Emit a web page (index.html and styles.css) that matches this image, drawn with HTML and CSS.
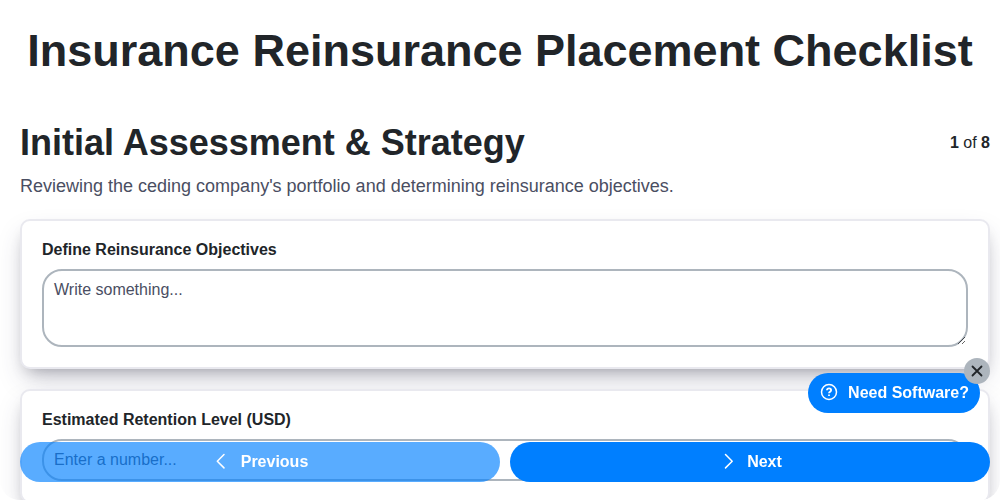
FILE: index.html
```html
<!DOCTYPE html>
<html lang="en">
<head>
<meta charset="utf-8">
<meta name="viewport" content="width=device-width, initial-scale=1">
<title>Insurance Reinsurance Placement Checklist</title>
<link rel="stylesheet" href="styles.css">
</head>
<body>
<main class="page">
  <h1 class="title">Insurance Reinsurance Placement Checklist</h1>
  <form class="step">
    <header class="step-header">
      <div class="step-heading">
        <h2 class="step-title">Initial Assessment &amp; Strategy</h2>
        <span class="step-count"><b>1</b> of <b>8</b></span>
      </div>
      <p class="step-text">Reviewing the ceding company's portfolio and determining reinsurance objectives.</p>
    </header>
    <div class="card">
      <label class="label" for="objectives">Define Reinsurance Objectives</label>
      <textarea class="field field-area" id="objectives" placeholder="Write something..."></textarea>
    </div>
    <div class="card">
      <label class="label" for="retention">Estimated Retention Level (USD)</label>
      <input class="field" id="retention" type="text" inputmode="decimal" placeholder="Enter a number...">
    </div>
  </form>
</main>
<nav class="pager">
  <button class="button" type="button" disabled>
    <svg class="icon" viewBox="0 0 20 20" aria-hidden="true"><path d="M12 2.500 5.300 9.200l6.700 6.700"/></svg>
    Previous
  </button>
  <button class="button" type="button">
    <svg class="icon" viewBox="0 0 20 20" aria-hidden="true"><path d="m7.500 2.500 6.700 6.700-6.700 6.700"/></svg>
    Next
  </button>
</nav>
<aside class="promo">
  <button class="button promo-button" type="button">
    <svg class="icon" viewBox="0 0 20 20" aria-hidden="true"><circle cx="10" cy="9" r="7.500"/><path class="mark" d="M7.900 7.300c0-1.300.9-2 2.100-2s2.100.7 2.100 1.900c0 1.500-2.100 1.500-2.100 3.100"/><path class="mark" d="M10 11.500v1.600"/></svg>
    Need Software?
  </button>
  <button class="promo-close" type="button" aria-label="Close">
    <svg class="close-icon" viewBox="0 0 12 12" aria-hidden="true"><path d="m1.500 1.500 9 9m0-9-9 9"/></svg>
  </button>
</aside>
</body>
</html>
```
FILE: styles.css
```css
* {
  box-sizing: border-box;
}

body {
  margin: 0;
  background: #fff;
  color: #212529;
  font-family: "Liberation Sans", Arial, sans-serif;
  font-size: 16px;
  line-height: 18px;
}

.page {
  display: flex;
  flex-direction: column;
  height: 100vh;
}

.title {
  margin: 0;
  padding: 25px 20px;
  font-size: 45px;
  line-height: 52px;
  text-align: center;
}

.step {
  display: flex;
  flex: 1;
  flex-direction: column;
  gap: 20px;
  min-height: 0;
  padding: 20px 10px 0 20px;
  border-radius: 20px;
  overflow: hidden;
}

.step-header,
.card {
  display: flex;
  flex: none;
  flex-direction: column;
}

.step-header {
  gap: 10px;
  padding-bottom: 1px;
}

.step-heading {
  display: flex;
  align-items: center;
  justify-content: space-between;
  gap: 20px;
}

.step-title {
  margin: 0;
  font-size: 36px;
  line-height: 42px;
}

.step-text {
  margin: 0;
  color: #4a4e62;
  font-size: 18px;
  line-height: 24px;
}

.card {
  gap: 10px;
  padding: 20px;
  border: 2px solid #e9e9ef;
  border-radius: 10px;
  background: #fff;
  box-shadow: 0 13px 27px -5px rgba(50, 50, 93, 0.25), 0 8px 16px -8px rgba(0, 0, 0, 0.3);
}

.label {
  font-weight: bold;
}

.field {
  display: block;
  width: 100%;
  height: 42px;
  margin: 0;
  padding: 10px;
  border: 2px solid #adb5bd;
  border-radius: 20px;
  background: #fff;
  color: #212529;
  font: inherit;
}

.field-area {
  height: 78px;
}

.field::placeholder {
  color: #4a4e62;
  opacity: 1;
}

.pager {
  position: fixed;
  right: 10px;
  bottom: 18px;
  left: 20px;
  display: grid;
  grid-template-columns: 1fr 1fr;
  gap: 10px;
}

.button {
  display: flex;
  align-items: center;
  justify-content: center;
  gap: 9px;
  height: 40px;
  padding: 0 11px;
  border: 0;
  border-radius: 20px;
  background: #007fff;
  color: #fff;
  font: inherit;
  font-weight: bold;
}

.button:disabled {
  background: rgba(0, 127, 255, 0.65);
}

.icon {
  width: 20px;
  height: 20px;
  fill: none;
  stroke: currentColor;
  stroke-width: 1.5;
  stroke-linecap: round;
  stroke-linejoin: round;
}

.promo {
  position: fixed;
  right: 20px;
  bottom: 87px;
}

.mark {
  stroke-width: 1.8;
  stroke-linecap: butt;
}

.promo-close {
  position: absolute;
  top: -15px;
  right: -10px;
  display: flex;
  align-items: center;
  justify-content: center;
  width: 26px;
  height: 26px;
  padding: 0;
  border: 0;
  border-radius: 50%;
  background: #adb5bd;
  color: #212529;
}

.close-icon {
  width: 12px;
  height: 12px;
  fill: none;
  stroke: currentColor;
  stroke-width: 1.8;
  stroke-linecap: round;
}
```
